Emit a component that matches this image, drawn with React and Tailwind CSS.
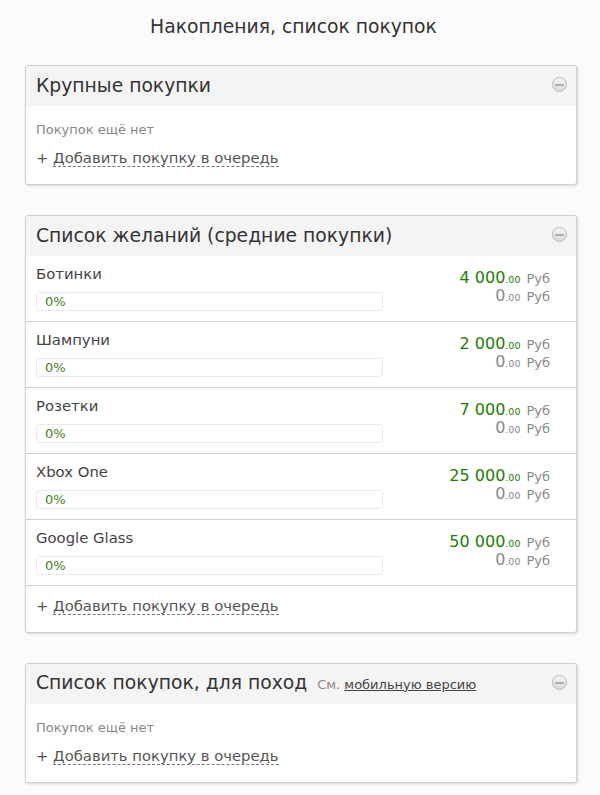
import React from 'react';

function CollapseIcon() {
  return (
    <span className="mb-[3px] flex h-[15px] w-[15px] items-center justify-center rounded-full border border-[#bbb] bg-gradient-to-b from-[#f6f6f6] to-[#d8d8d8]">
      <span className="h-[2px] w-[9px] bg-[#b0b0b0]"></span>
    </span>
  );
}

function Card({ title, extra, children }) {
  return (
    <section className="mb-[30px] rounded-[3px] border border-[#cfcfcf] bg-white shadow-[1px_1px_3px_rgba(0,0,0,0.15)]">
      <header className="flex h-10 items-center justify-between bg-[#f4f4f4] pl-[10px] pr-[9px]">
        <h2 className="flex items-baseline pb-[1px] text-[18.75px] leading-[38px] text-[#333]">
          {title}
          {extra}
        </h2>
        <CollapseIcon />
      </header>
      {children}
    </section>
  );
}

function AddLink() {
  return (
    <p className="text-[14.8px] leading-5 text-[#555]">
      + <span className="border-b border-dashed border-[#777]">Добавить покупку в очередь</span>
    </p>
  );
}

function Empty() {
  return (
    <div className="h-[78px] px-[10px] pt-[15px]">
      <p className="mb-[10px] text-[13px] leading-[17px] text-[#888]">Покупок ещё нет</p>
      <AddLink />
    </div>
  );
}

function Amount({ value, color }) {
  return (
    <p className="flex h-[18px] items-baseline justify-end leading-[18px]">
      <span className={`text-[16px] ${color}`}>{value}</span>
      <span className={`text-[9.5px] ${color}`}>.00</span>
      <span className="ml-[6px] text-[13px] text-[#888]">Руб</span>
    </p>
  );
}

function Row({ name, price }) {
  return (
    <div className="flex h-[66px] justify-between border-b border-[#cfcfcf] pl-[10px] pr-[26px]">
      <div className="w-[347px] pt-[8px]">
        <p className="text-[14.85px] leading-5 text-[#444]">{name}</p>
        <div className="mt-[8px] h-[19px] rounded-[3px] border border-[#eaeaea] pl-2 text-[13px] leading-[17px] text-[#3f7f1a]">0%</div>
      </div>
      <div className="pt-[13px]">
        <Amount value={price} color="text-[#1b8000]" />
        <Amount value="0" color="text-[#888]" />
      </div>
    </div>
  );
}

const wishes = [
  ['Ботинки', '4 000'],
  ['Шампуни', '2 000'],
  ['Розетки', '7 000'],
  ['Xbox One', '25 000'],
  ['Google Glass', '50 000'],
];

export default function App() {
  return (
    <div className="h-[795px] overflow-hidden bg-[#fbfbfb] pl-[25px] pr-[23px] pt-[14px] font-['DejaVu_Sans',sans-serif]">
      <h1 className="mb-[26px] h-[25px] pr-[15px] text-center text-[18.75px] leading-[25px] text-[#333]">Накопления, список покупок</h1>
      <Card title="Крупные покупки">
        <Empty />
      </Card>
      <Card title="Список желаний (средние покупки)">
        {wishes.map(([name, price]) => (
          <Row key={name} name={name} price={price} />
        ))}
        <div className="h-[46px] px-[10px] pt-[10px]">
          <AddLink />
        </div>
      </Card>
      <Card
        title="Список покупок, для поход"
        extra={
          <span className="ml-[10px] text-[13px] text-[#888]">
            См. <a className="text-[#444] underline">мобильную версию</a>
          </span>
        }
      >
        <Empty />
      </Card>
    </div>
  );
}
